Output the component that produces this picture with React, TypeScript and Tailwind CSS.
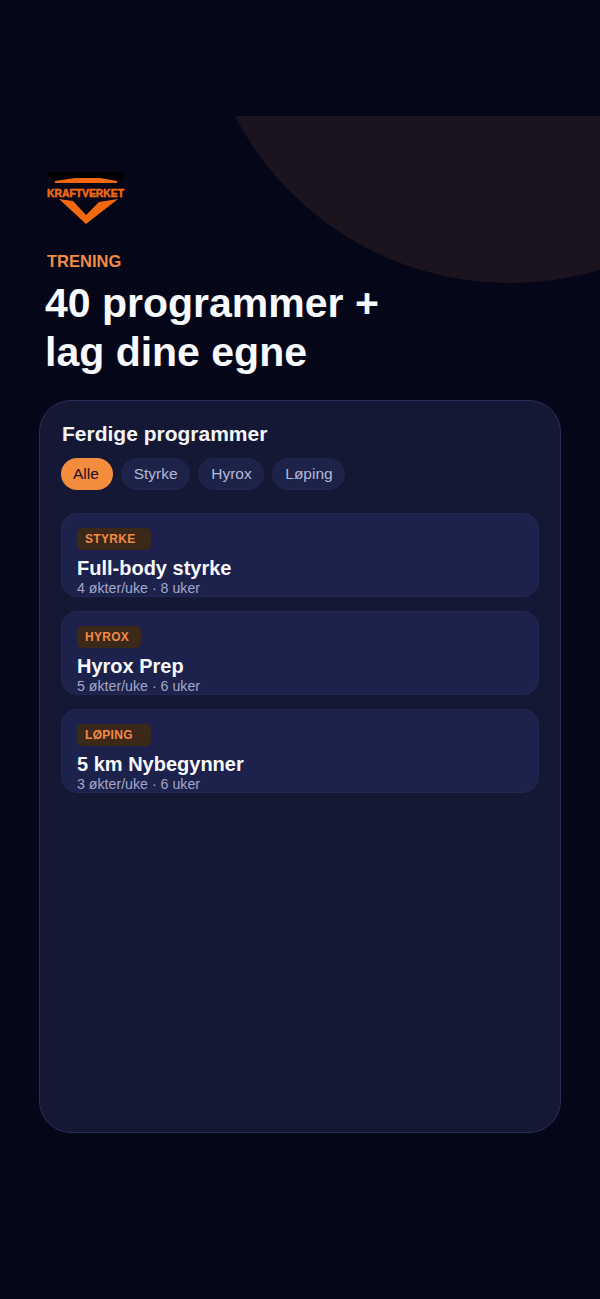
const filters = ["Alle", "Styrke", "Hyrox", "Løping"];

const programs = [
  { tag: "STYRKE", tagWidth: "w-[74px]", title: "Full-body styrke", meta: "4 økter/uke · 8 uker" },
  { tag: "HYROX", tagWidth: "w-[64px]", title: "Hyrox Prep", meta: "5 økter/uke · 6 uker" },
  { tag: "LØPING", tagWidth: "w-[74px]", title: "5 km Nybegynner", meta: "3 økter/uke · 6 uker" },
];

function Logo() {
  return (
    <svg width="84" height="54" viewBox="0 0 84 54" className="block">
      <path d="M3 0H80L76 11H8Z" fill="#000000" />
      <path d="M10 11V9L30 6H55L72 9V11Z" fill="#f4690f" />
      <text
        x="40.5"
        y="25"
        textAnchor="middle"
        textLength="77"
        lengthAdjust="spacingAndGlyphs"
        fontFamily="Liberation Sans, sans-serif"
        fontWeight="700"
        fontSize="10"
        fill="#f4690f"
        stroke="#f4690f"
        strokeWidth="0.5"
      >
        KRAFTVERKET
      </text>
      <path d="M14 27L28 29L41 43L54 30L73 27L41 52Z" fill="#f4690f" />
    </svg>
  );
}

export default function App() {
  return (
    <div className="min-h-[1299px] bg-[#050719] pt-[116px] font-['Liberation_Sans',Arial,sans-serif]">
      <section className="relative h-[284px] overflow-hidden px-[45px] pt-[56px]">
        <div className="absolute left-[200px] top-[-453px] h-[620px] w-[620px] rounded-full bg-[#1b141f]" />
        <div className="relative">
          <Logo />
          <p className="mt-[24px] pl-[2px] text-[16.5px] font-bold leading-[22px] text-[#f28b45]">TRENING</p>
          <h1 className="mt-[7px] text-[41px] font-bold leading-[49px] text-[#f8f9fc]">
            40 programmer +<br />
            lag dine egne
          </h1>
        </div>
      </section>

      <main className="mx-[39px] flex h-[733px] flex-col rounded-[32px] border border-[#2a2e5a] bg-[#141835] px-[21px] pt-[20px]">
        <h2 className="pl-px text-[21px] font-bold leading-[26px] text-[#f4f5fa]">Ferdige programmer</h2>

        <div className="mt-[11px] flex gap-2">
          {filters.map((name, i) => (
            <span
              key={name}
              className={
                i === 0
                  ? "flex h-[32px] items-center rounded-full bg-[#f48c3e] pl-[12px] pr-[14px] text-[15.5px] text-[#1a1020]"
                  : "flex h-[32px] items-center rounded-full border border-[#20264f] bg-[#1d2249] px-[11.8px] text-[15.5px] text-[#b4b8d8]"
              }
            >
              {name}
            </span>
          ))}
        </div>

        <div className="mt-[23px] flex flex-col gap-[14px]">
          {programs.map((p) => (
            <div
              key={p.tag}
              className="h-[84px] overflow-hidden rounded-[16px] border border-[#232853] bg-[#1c224c] px-[15px] pt-[14px]"
            >
              <span
                className={`flex h-[22px] ${p.tagWidth} items-center rounded-[5px] bg-[#3c2818] pl-[8px] text-xs font-bold tracking-[0.3px] text-[#f28b45]`}
              >
                {p.tag}
              </span>
              <h3 className="mt-[6px] text-xl font-bold leading-[24px] text-[#f8f9fc]">{p.title}</h3>
              <p className="text-[14.2px] leading-[16px] text-[#a3a7c8]">{p.meta}</p>
            </div>
          ))}
        </div>
      </main>
    </div>
  );
}
